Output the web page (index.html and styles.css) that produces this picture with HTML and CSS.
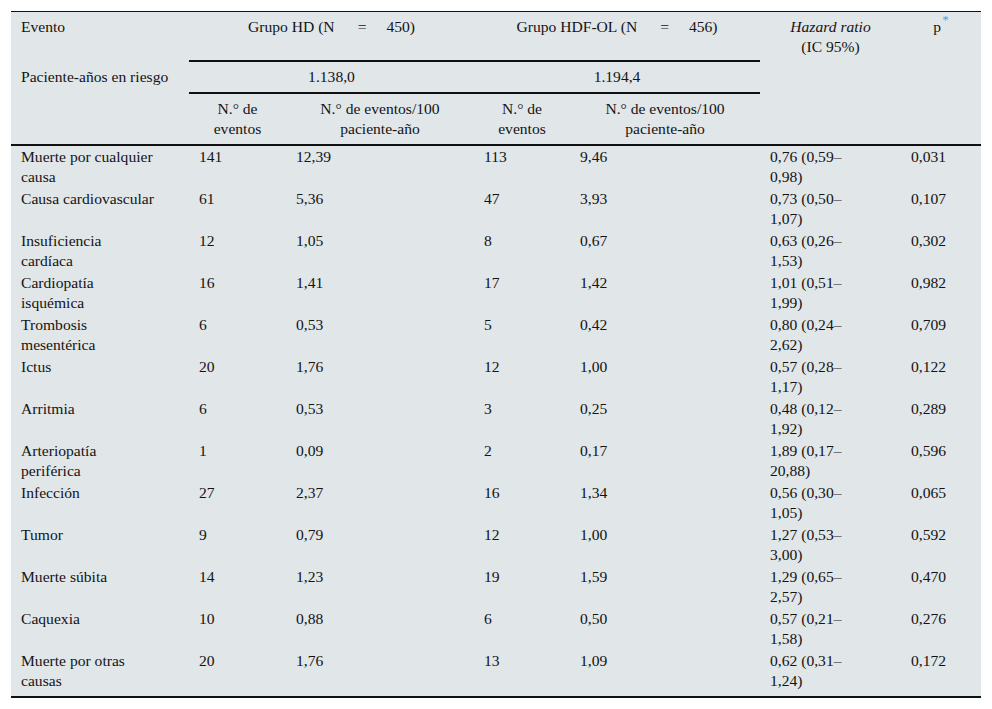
FILE: index.html
```html
<!DOCTYPE html>
<html lang="es">
<head>
<meta charset="utf-8">
<title>Tabla de eventos</title>
<link rel="stylesheet" href="styles.css">
</head>
<body>
<table class="tbl">
  <colgroup>
    <col class="c1"><col class="c2"><col class="c3"><col class="c4"><col class="c5"><col class="c6"><col class="c7">
  </colgroup>
  <thead>
    <tr class="h1">
      <th class="lft">Evento</th>
      <th colspan="2" class="grp">Grupo HD (N<span class="eq">=</span>450)</th>
      <th colspan="2" class="grp">Grupo HDF-OL (N<span class="eq">=</span>456)</th>
      <th rowspan="3" class="end"><em>Hazard ratio</em><br>(IC 95%)</th>
      <th rowspan="3" class="end">p<sup class="ast">*</sup></th>
    </tr>
    <tr class="h2">
      <th class="lft">Paciente-años en riesgo</th>
      <th colspan="2" class="grp">1.138,0</th>
      <th colspan="2" class="grp">1.194,4</th>
    </tr>
    <tr class="h3">
      <th class="lft end"></th>
      <th class="end">N.° de<br>eventos</th>
      <th class="end">N.° de eventos/100<br>paciente-año</th>
      <th class="end">N.° de<br>eventos</th>
      <th class="end">N.° de eventos/100<br>paciente-año</th>
    </tr>
  </thead>
  <tbody>
    <tr><td>Muerte por cualquier<br>causa</td><td>141</td><td>12,39</td><td>113</td><td>9,46</td><td>0,76 (0,59–<br>0,98)</td><td>0,031</td></tr>
    <tr><td>Causa cardiovascular</td><td>61</td><td>5,36</td><td>47</td><td>3,93</td><td>0,73 (0,50–<br>1,07)</td><td>0,107</td></tr>
    <tr><td>Insuficiencia<br>cardíaca</td><td>12</td><td>1,05</td><td>8</td><td>0,67</td><td>0,63 (0,26–<br>1,53)</td><td>0,302</td></tr>
    <tr><td>Cardiopatía<br>isquémica</td><td>16</td><td>1,41</td><td>17</td><td>1,42</td><td>1,01 (0,51–<br>1,99)</td><td>0,982</td></tr>
    <tr><td>Trombosis<br>mesentérica</td><td>6</td><td>0,53</td><td>5</td><td>0,42</td><td>0,80 (0,24–<br>2,62)</td><td>0,709</td></tr>
    <tr><td>Ictus</td><td>20</td><td>1,76</td><td>12</td><td>1,00</td><td>0,57 (0,28–<br>1,17)</td><td>0,122</td></tr>
    <tr><td>Arritmia</td><td>6</td><td>0,53</td><td>3</td><td>0,25</td><td>0,48 (0,12–<br>1,92)</td><td>0,289</td></tr>
    <tr><td>Arteriopatía<br>periférica</td><td>1</td><td>0,09</td><td>2</td><td>0,17</td><td>1,89 (0,17–<br>20,88)</td><td>0,596</td></tr>
    <tr><td>Infección</td><td>27</td><td>2,37</td><td>16</td><td>1,34</td><td>0,56 (0,30–<br>1,05)</td><td>0,065</td></tr>
    <tr><td>Tumor</td><td>9</td><td>0,79</td><td>12</td><td>1,00</td><td>1,27 (0,53–<br>3,00)</td><td>0,592</td></tr>
    <tr><td>Muerte súbita</td><td>14</td><td>1,23</td><td>19</td><td>1,59</td><td>1,29 (0,65–<br>2,57)</td><td>0,470</td></tr>
    <tr><td>Caquexia</td><td>10</td><td>0,88</td><td>6</td><td>0,50</td><td>0,57 (0,21–<br>1,58)</td><td>0,276</td></tr>
    <tr class="last"><td>Muerte por otras<br>causas</td><td>20</td><td>1,76</td><td>13</td><td>1,09</td><td>0,62 (0,31–<br>1,24)</td><td>0,172</td></tr>
  </tbody>
</table>
</body>
</html>
```

FILE: styles.css
```css
html, body {
  margin: 0;
  padding: 0;
  background: #ffffff;
}

.tbl {
  margin: 11px 11px 0 11px;
  width: 970px;
  table-layout: fixed;
  border-collapse: separate;
  border-spacing: 0;
  background: #e1e6e9;
  border-top: 1px solid #111;
  border-bottom: 2px solid #111;
  font-family: "Liberation Serif", "Times New Roman", serif;
  font-size: 15.6px;
  line-height: 20px;
  color: #141414;
}

.c1 { width: 178px; }
.c2 { width: 97px; }
.c3 { width: 188px; }
.c4 { width: 96px; }
.c5 { width: 190px; }
.c6 { width: 141px; }
.c7 { width: 80px; }

.tbl th {
  font-weight: normal;
  text-align: center;
  vertical-align: top;
  padding: 5px 0 0 0;
  white-space: nowrap;
}

.tbl th.lft {
  text-align: left;
  padding-left: 10px;
}

.tbl .h1 { height: 50px; }
.tbl .h2 { height: 32px; }
.tbl .h3 { height: 52px; }

.tbl th.grp {
  border-bottom: 2px solid #111;
}

.tbl th.end {
  border-bottom: 2px solid #111;
}

.eq {
  display: inline-block;
  margin: 0 20px 0 23px;
}

.ast {
  color: #3fa3e6;
  font-size: 13px;
  line-height: 0;
  vertical-align: 8px;
  margin-left: 1px;
}

.tbl td {
  vertical-align: top;
  text-align: left;
  padding: 1px 0 1px 10px;
  height: 40px;
  white-space: nowrap;
}

.tbl tr.last td {
  padding-bottom: 5px;
}
```
